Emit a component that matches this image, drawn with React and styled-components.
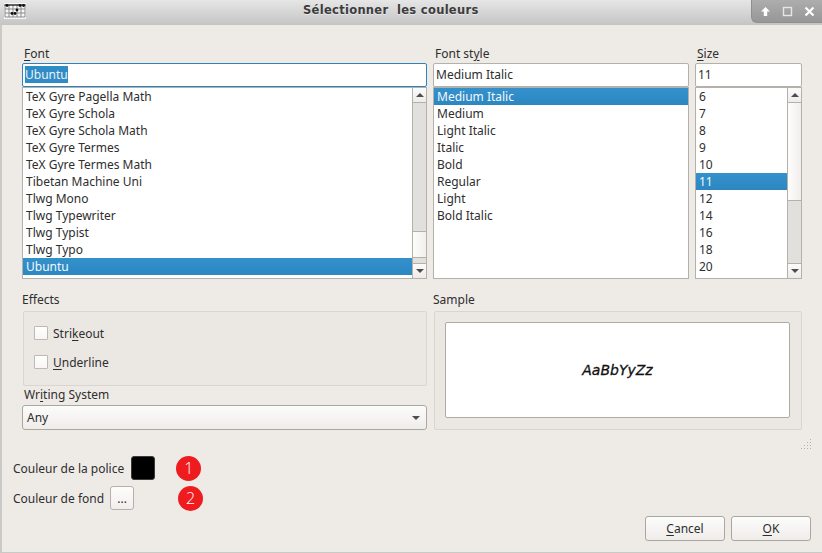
import React from 'react';
import styled, { createGlobalStyle } from 'styled-components';

const GlobalStyle = createGlobalStyle`
  html, body { margin: 0; padding: 0; }
  body {
    width: 822px;
    height: 553px;
    overflow: hidden;
    background: #eeebe7;
    font-family: "Noto Sans", "Open Sans", sans-serif;
    font-size: 12px;
    color: #2e2e2e;
  }
  * { box-sizing: border-box; }
`;

const Window = styled.div`
  width: 822px;
  height: 553px;
  display: flex;
  flex-direction: column;
  border-left: 2px solid #c9c9c7;
  border-bottom: 1px solid #c9c9c7;
`;

const TitleBar = styled.header`
  height: 25px;
  margin-left: -2px;
  flex: none;
  display: flex;
  align-items: flex-start;
  justify-content: space-between;
  background: linear-gradient(#e6e6e6, #c4c4c4);
`;

const AppIcon = styled.svg`
  width: 22px;
  height: 16px;
  margin: 3px 0 0 4px;
`;

const Title = styled.div`
  position: absolute;
  left: 303px;
  top: 3px;
  font-family: "DejaVu Sans", sans-serif;
  font-weight: 700;
  font-size: 11.5px;
  line-height: 15px;
  letter-spacing: 0.3px;
  white-space: pre;
  color: #3c3c3c;
  text-shadow: 0 1px 0 #e8e8e8;
`;

const WinButtons = styled.div`
  width: 71px;
  height: 23px;
  display: flex;
  align-items: center;
  gap: 11px;
  padding-left: 8px;
  background: linear-gradient(#adadad, #979797);
  border-bottom-left-radius: 6px;
  border-left: 1px solid #8f8f8f;
  border-bottom: 1px solid #8f8f8f;
`;

const Body = styled.main`
  flex: 1;
  display: flex;
  flex-direction: column;
  padding: 20px 11px 0 11px;
  position: relative;
`;

const FontGrid = styled.div`
  display: grid;
  grid-template-columns: 405px 256px 107px;
  column-gap: 6px;
  margin-left: 9px;
`;

const Column = styled.section`
  display: flex;
  flex-direction: column;
`;

const Label = styled.div`
  height: 18px;
  line-height: 18px;
  padding-left: ${({ $indent }) => $indent}px;
  white-space: pre;
`;

const GroupLabel = styled(Label)`
  margin-bottom: 2px;
`;

const ComboLabel = styled(Label)`
  margin-bottom: 1px;
`;

const Key = styled.span`
  text-decoration: underline;
  text-underline-offset: 2px;
  text-decoration-thickness: 1px;
`;

const Input = styled.div`
  height: 24px;
  background: #fff;
  border: 1px solid ${({ $focus }) => ($focus ? '#2f83ba' : '#b4b1ac')};
  border-radius: 2px;
  padding: 0 0 2px 2px;
  display: flex;
  align-items: center;
  font-size: 12px;
`;

const Selected = styled.span`
  background: #308cc6;
  color: #e8f1f7;
  line-height: 17px;
`;

const ListBox = styled.div`
  height: 192px;
  background: #fff;
  border: 1px solid #b4b1ac;
  display: flex;
`;

const Items = styled.ul`
  flex: 1;
  list-style: none;
  margin: 0;
  padding: 0;
  min-width: 0;
`;

const Item = styled.li`
  height: 17px;
  line-height: 17px;
  padding-left: 3px;
  background: ${({ $active }) => ($active ? 'linear-gradient(#3391cc, #2c87c1)' : 'transparent')};
  color: ${({ $active }) => ($active ? '#f4f8fb' : '#2e2e2e')};
`;

const Scrollbar = styled.div`
  width: 14px;
  flex: none;
  display: flex;
  flex-direction: column;
  border-left: 1px solid #b4b1ac;
  background: #e2e0dc;
`;

const ArrowButton = styled.div`
  height: 15px;
  flex: none;
  display: flex;
  align-items: center;
  justify-content: center;
  background: linear-gradient(#fbfbfa, #eeece9);
  border-${({ $down }) => ($down ? 'top' : 'bottom')}: 1px solid #b4b1ac;
`;

const Arrow = styled.span`
  width: 0;
  height: 0;
  border-left: 4px solid transparent;
  border-right: 4px solid transparent;
  ${({ $down }) => ($down ? 'border-top' : 'border-bottom')}: 4px solid #4d4d4d;
`;

const Track = styled.div`
  height: ${({ $height }) => $height}px;
  flex: ${({ $height }) => ($height ? 'none' : 1)};
`;

const Thumb = styled.div`
  height: ${({ $height }) => $height}px;
  flex: none;
  background: linear-gradient(90deg, #fdfdfc, #f1efec);
  border-bottom: 1px solid #b4b1ac;
  border-top: ${({ $top }) => ($top ? '1px solid #b4b1ac' : 'none')};
`;

const LowerGrid = styled.div`
  display: grid;
  grid-template-columns: 405px 369px;
  column-gap: 6px;
  margin: 12px 0 0 9px;
`;

const GroupBox = styled.div`
  height: ${({ $height }) => $height}px;
  margin-left: 1px;
  background: #ebe8e4;
  border: 1px solid #d9d6d1;
  border-radius: 2px;
`;

const EffectsBox = styled(GroupBox)`
  padding: 11px 10px 0;
  display: flex;
  flex-direction: column;
  gap: 9px;
`;

const CheckRow = styled.label`
  height: 20px;
  display: flex;
  align-items: center;
  gap: 5px;
`;

const CheckBox = styled.span`
  width: 14px;
  height: 14px;
  background: linear-gradient(#fff, #f7f6f4);
  border: 1px solid #bdbab5;
  border-radius: 1px;
`;

const Combo = styled.div`
  height: 25px;
  display: flex;
  align-items: center;
  justify-content: space-between;
  padding: 0 6px 0 4px;
  background: linear-gradient(#fcfcfb, #efedea);
  border: 1px solid #aaa7a2;
  border-radius: 3px;
`;

const SampleBox = styled(GroupBox)`
  padding: 10px 11px 11px 10px;
`;

const SampleText = styled.div`
  height: 96px;
  display: flex;
  align-items: center;
  justify-content: center;
  background: #fff;
  border: 1px solid #aeaba6;
  border-radius: 2px;
  font-family: "DejaVu Sans", sans-serif;
  font-size: 14px;
  font-style: italic;
  -webkit-text-stroke: 0.3px #111;
  color: #111;
`;

const Grip = styled.svg`
  position: absolute;
  right: 10px;
  top: 413px;
  width: 12px;
  height: 12px;
`;

const ColorRows = styled.div`
  margin-top: 26px;
  display: flex;
  flex-direction: column;
  gap: 6px;
`;

const ColorRow = styled.div`
  height: 24px;
  display: flex;
  align-items: center;
  gap: ${({ $gap }) => $gap}px;
`;

const Swatch = styled.div`
  width: 24px;
  height: 24px;
  background: #000;
  border: 1px solid #3b3b3b;
  border-radius: 3px;
`;

const DotsButton = styled.div`
  width: 24px;
  height: 24px;
  display: flex;
  align-items: center;
  justify-content: center;
  background: linear-gradient(#fdfdfc, #f1efec);
  border: 1px solid #b4b1ac;
  border-radius: 3px;
`;

const Badge = styled.span`
  width: 25px;
  height: 25px;
  margin-left: ${({ $gap }) => $gap}px;
  display: flex;
  align-items: center;
  justify-content: center;
  border-radius: 50%;
  background: #ee1c1f;
  color: #fff;
  font-family: "Open Sans", sans-serif;
  font-weight: 300;
  font-size: 16px;
`;

const Footer = styled.footer`
  margin: 6px 0 0 auto;
  display: flex;
  gap: 6px;
`;

const PushButton = styled.div`
  width: 80px;
  height: 25px;
  display: flex;
  align-items: center;
  justify-content: center;
  background: linear-gradient(#fcfcfb, #efedea);
  border: 1px solid #aaa7a2;
  border-radius: 3px;
`;

const fonts = [
  'TeX Gyre Pagella Math', 'TeX Gyre Schola', 'TeX Gyre Schola Math', 'TeX Gyre Termes',
  'TeX Gyre Termes Math', 'Tibetan Machine Uni', 'Tlwg Mono', 'Tlwg Typewriter',
  'Tlwg Typist', 'Tlwg Typo', 'Ubuntu',
];
const styles = ['Medium Italic', 'Medium', 'Light Italic', 'Italic', 'Bold', 'Regular', 'Light', 'Bold Italic'];
const sizes = ['6', '7', '8', '9', '10', '11', '12', '14', '16', '18', '20'];

const List = ({ items, active, children }) => (
  <ListBox>
    <Items>
      {items.map((it) => <Item key={it} $active={it === active}>{it}</Item>)}
    </Items>
    {children}
  </ListBox>
);

const Bar = ({ children }) => (
  <Scrollbar>
    <ArrowButton><Arrow /></ArrowButton>
    {children}
    <ArrowButton $down><Arrow $down /></ArrowButton>
  </Scrollbar>
);

const ChordIcon = () => (
  <AppIcon viewBox="0 0 22 16">
    <rect x="0" y="0" width="22" height="16" fill="#f7f7f7" />
    <path d="M1 6H21M1 10H21M1 14H21M1 2V14M5 2V14M9 2V14M13 2V14M17 2V14M21 2V14" stroke="#8a8a8a" strokeWidth="1" fill="none" />
    <path d="M0.5 2H21.5" stroke="#222" strokeWidth="1.4" />
    <circle cx="3" cy="2.5" r="1.4" fill="#111" />
    <circle cx="16" cy="2.5" r="1.4" fill="#111" />
    <circle cx="19.5" cy="2.5" r="1.4" fill="#111" />
    <circle cx="8" cy="10.5" r="1.4" fill="#111" />
    <circle cx="11" cy="10.5" r="1.4" fill="#111" />
    <circle cx="13" cy="7" r="1.4" fill="#111" />
  </AppIcon>
);

export default function App() {
  return (
    <>
      <GlobalStyle />
      <Window>
        <TitleBar>
          <ChordIcon />
          <Title>Sélectionner  les couleurs</Title>
          <WinButtons>
            <svg width="11" height="11" viewBox="0 0 11 11"><path d="M5.5 1 L10 5.5 H7.2 V10 H3.8 V5.5 H1 Z" fill="#fff" /></svg>
            <svg width="11" height="11" viewBox="0 0 11 11"><rect x="1.5" y="1.5" width="8" height="8" fill="none" stroke="#e6e6e6" strokeWidth="1.4" /></svg>
            <svg width="11" height="11" viewBox="0 0 11 11"><path d="M1.5 1.5 L9.5 9.5 M9.5 1.5 L1.5 9.5" stroke="#fff" strokeWidth="2.2" /></svg>
          </WinButtons>
        </TitleBar>
        <Body>
          <FontGrid>
            <Column>
              <Label $indent={2}><Key>F</Key>ont</Label>
              <Input $focus><Selected>Ubuntu</Selected></Input>
              <List items={fonts} active="Ubuntu">
                <Bar>
                  <Track />
                  <Thumb $height={27} $top />
                  <Track $height={5} />
                </Bar>
              </List>
            </Column>
            <Column>
              <Label $indent={2}>Font st<Key>y</Key>le</Label>
              <Input>Medium Italic</Input>
              <List items={styles} active="Medium Italic" />
            </Column>
            <Column>
              <Label $indent={2}><Key>S</Key>ize</Label>
              <Input>11</Input>
              <List items={sizes} active="11">
                <Bar>
                  <Thumb $height={98} />
                  <Track />
                </Bar>
              </List>
            </Column>
          </FontGrid>
          <LowerGrid>
            <Column>
              <GroupLabel $indent={0}>Effects</GroupLabel>
              <EffectsBox $height={75}>
                <CheckRow><CheckBox /><span>Stri<Key>k</Key>eout</span></CheckRow>
                <CheckRow><CheckBox /><span><Key>U</Key>nderline</span></CheckRow>
              </EffectsBox>
              <ComboLabel $indent={2}>Wr<Key>i</Key>ting System</ComboLabel>
              <Combo>Any<Arrow $down /></Combo>
            </Column>
            <Column>
              <GroupLabel $indent={0}>Sample</GroupLabel>
              <SampleBox $height={119}>
                <SampleText>AaBbYyZz</SampleText>
              </SampleBox>
            </Column>
          </LowerGrid>
          <Grip viewBox="0 0 12 12">
            <path d="M10.5 1v1M7.5 4v1M10.5 4v1M4.5 7v1M7.5 7v1M10.5 7v1M1.5 10v1M4.5 10v1M7.5 10v1M10.5 10v1" stroke="#b5b2ad" strokeWidth="1" />
          </Grip>
          <ColorRows>
            <ColorRow $gap={7}>
              Couleur de la police
              <Swatch />
              <Badge $gap={14}>1</Badge>
            </ColorRow>
            <ColorRow $gap={6}>
              Couleur de fond
              <DotsButton>...</DotsButton>
              <Badge $gap={38}>2</Badge>
            </ColorRow>
          </ColorRows>
          <Footer>
            <PushButton><span><Key>C</Key>ancel</span></PushButton>
            <PushButton><span><Key>O</Key>K</span></PushButton>
          </Footer>
        </Body>
      </Window>
    </>
  );
}
